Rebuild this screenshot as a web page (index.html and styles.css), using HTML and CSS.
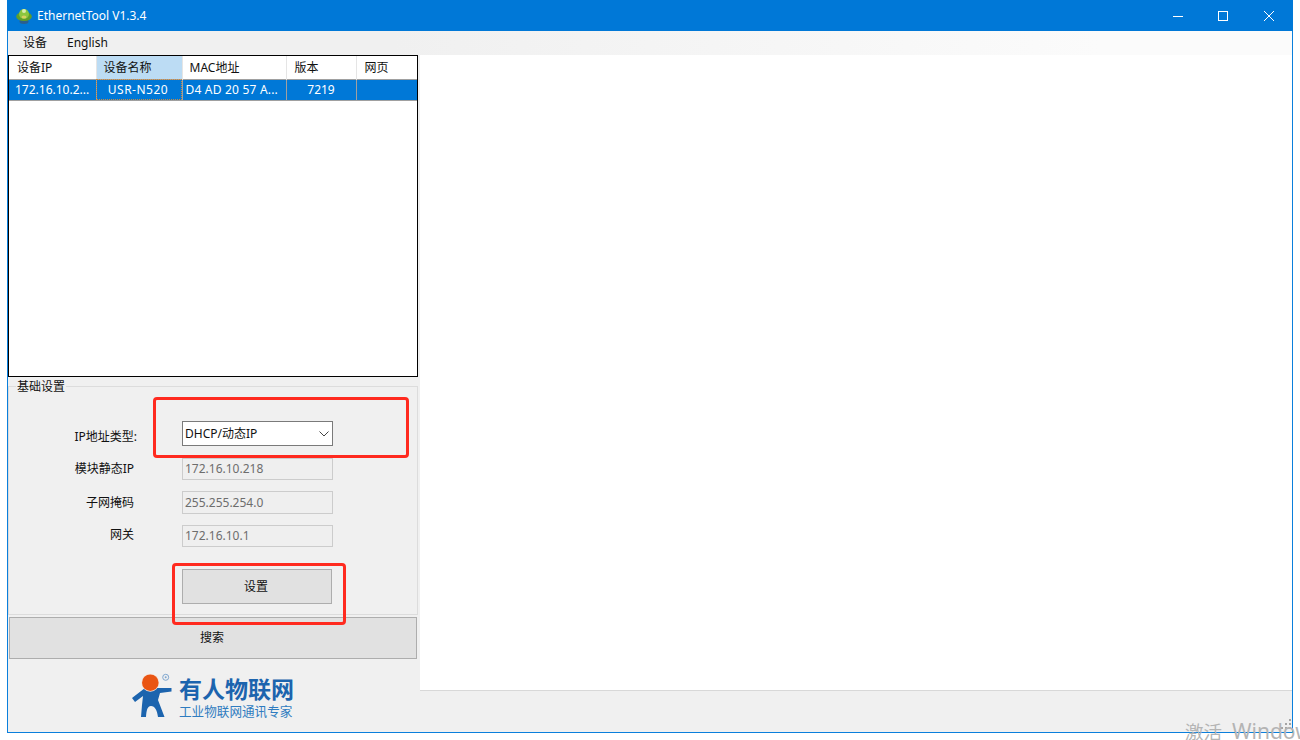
FILE: index.html
```html
<!DOCTYPE html>
<html lang="zh-CN">
<head>
    <meta charset="UTF-8">
    <title>EthernetTool V1.3.4</title>
    <link rel="stylesheet" href="styles.css">
</head>
<body>
    <div class="window">
        <div class="titlebar">
            <svg class="app-icon" width="16" height="16" viewBox="0 0 16 16">
                <ellipse cx="8" cy="13.500" rx="4.500" ry="2.500" fill="#2b5f8f"/>
                <ellipse cx="8" cy="8.500" rx="7.800" ry="4.500" fill="#5f9e2a"/>
                <circle cx="8" cy="6" r="5" fill="#8cc63f"/>
                <circle cx="8" cy="3" r="2" fill="#d9eeb0"/>
                <ellipse cx="8" cy="9" rx="2.500" ry="1.500" fill="#d8d060"/>
            </svg>
            <span class="title-text">EthernetTool V1.3.4</span>
            <div class="win-btns">
                <div class="win-btn">
                    <svg width="12" height="12" viewBox="0 0 12 12"><path d="M2 6.500H12" stroke="#fff" fill="none"/></svg>
                </div>
                <div class="win-btn">
                    <svg width="12" height="12" viewBox="0 0 12 12"><rect x="1.500" y="1.500" width="9" height="9" stroke="#fff" fill="none"/></svg>
                </div>
                <div class="win-btn">
                    <svg width="12" height="12" viewBox="0 0 12 12"><path d="M1 1L11 11M11 1L1 11" stroke="#fff" fill="none"/></svg>
                </div>
            </div>
        </div>

        <div class="menubar">
            <span class="menu-item">设备</span>
            <span class="menu-item">English</span>
        </div>

        <div class="main">
            <div class="left-panel">
                <div class="device-list">
                    <table>
                        <colgroup>
                            <col class="col-ip"><col class="col-name"><col class="col-mac"><col class="col-ver"><col class="col-web">
                        </colgroup>
                        <thead>
                            <tr>
                                <th>设备IP</th>
                                <th class="sorted">设备名称</th>
                                <th class="mac-head">MAC地址</th>
                                <th>版本</th>
                                <th>网页</th>
                            </tr>
                        </thead>
                        <tbody>
                            <tr class="selected">
                                <td class="ip-cell">172.16.10.2...</td>
                                <td class="focused">USR-N520</td>
                                <td class="mac-cell">D4 AD 20 57 A...</td>
                                <td>7219</td>
                                <td></td>
                            </tr>
                        </tbody>
                    </table>
                </div>

                <fieldset class="settings">
                    <legend>基础设置</legend>
                    <div class="form-grid">
                        <label class="type-label">IP地址类型:</label>
                        <div class="select-box">
                            <span>DHCP/动态IP</span>
                            <svg width="10" height="6" viewBox="0 0 10 6"><path d="M0.500 0.500L5 5L9.500 0.500" stroke="#444" fill="none"/></svg>
                        </div>
                        <label>模块静态IP</label>
                        <input class="field" type="text" value="172.16.10.218" disabled>
                        <label>子网掩码</label>
                        <input class="field" type="text" value="255.255.254.0" disabled>
                        <label class="gw-label">网关</label>
                        <input class="field" type="text" value="172.16.10.1" disabled>
                    </div>
                    <button class="btn btn-set">设置</button>
                </fieldset>

                <button class="btn btn-search">搜索</button>

                <div class="logo">
                    <svg width="44" height="46" viewBox="0 0 44 46">
                        <path d="M40.500 16V19.500L29 21L27 28L33.500 45H27C26 38 24 34 20 34C16 34 15.500 39 15 45H10L11 33L12 24L4 30L1 26L14 16Z" fill="#1c64ae"/>
                        <circle cx="19.300" cy="10.700" r="9" fill="#f6e3d8"/>
                        <circle cx="19.300" cy="10.700" r="8.300" fill="#e95513"/>
                        <circle cx="34.700" cy="5.300" r="1" fill="#7fa6cf"/>
                        <circle cx="34.700" cy="5.300" r="3" fill="none" stroke="#7fa6cf"/>
                    </svg>
                    <div class="logo-text">
                        <div class="logo-name">有人物联网</div>
                        <div class="logo-sub">工业物联网通讯专家</div>
                    </div>
                </div>
            </div>

            <div class="right-panel">
                <div class="content"></div>
                <div class="statusbar"></div>
            </div>
        </div>
    </div>

    <!-- red marks drawn over the screenshot -->
    <div class="mark mark-type"></div>
    <div class="mark mark-set"></div>

    <svg class="grip" width="10" height="11" viewBox="0 0 10 11">
        <path d="M8 0h2v2H8zM4 4h2v2H4zM8 4h2v2H8zM0 8h2v2H0zM4 8h2v2H4zM8 8h2v2H8z" fill="#a4a4a4"/>
    </svg>
    <div class="watermark">激活<span class="wm-latin">Windows</span></div>
</body>
</html>
```

FILE: styles.css
```css
* {
    box-sizing: border-box;
    margin: 0;
    padding: 0;
    font-family: "Noto Sans", "Noto Sans CJK SC", sans-serif;
}

html, body {
    width: 1300px;
    height: 740px;
    overflow: hidden;
}

body {
    background-color: #fff;
    padding-left: 7px;
    font-size: 12px;
    color: #111;
    position: relative;
}

.window {
    width: 1286px;
    height: 733px;
    border: 1px solid #0a7fdc;
    border-top: none;
    display: flex;
    flex-direction: column;
}

.titlebar {
    height: 31px;
    margin: 0 -1px;
    background-color: #0078d7;
    color: #fff;
    display: flex;
    align-items: center;
    padding-left: 9px;
    flex-shrink: 0;
}

.app-icon {
    margin-right: 5px;
}

.title-text {
    font-size: 12px;
}

.win-btns {
    margin-left: auto;
    margin-right: 1px;
    display: flex;
}

.win-btn {
    width: 46px;
    height: 31px;
    display: flex;
    align-items: center;
    justify-content: center;
}

.menubar {
    height: 24px;
    flex-shrink: 0;
    background: linear-gradient(to right, #f0f0f0 30%, #fbfbfb 85%);
    display: flex;
    align-items: center;
    padding: 0 0 2px 15px;
    gap: 20px;
}

.main {
    flex: 1;
    display: flex;
    min-height: 0;
}

.left-panel {
    width: 412px;
    flex-shrink: 0;
    background-color: #f0f0f0;
}

.device-list {
    width: 410px;
    height: 322px;
    background-color: #fff;
    border: 1px solid #000;
}

table {
    width: 100%;
    table-layout: fixed;
    border-collapse: collapse;
}

.col-ip { width: 87px; }
.col-name { width: 86px; }
.col-mac { width: 104px; }
.col-ver { width: 70px; }
.col-web { width: 61px; }

th {
    height: 23px;
    padding-left: 8px;
    font-weight: normal;
    text-align: left;
    border-right: 1px solid #e5e5e5;
}

th.sorted {
    background-color: #bcdcf4;
    padding-left: 7px;
}

th.mac-head {
    padding-left: 7px;
}

td {
    height: 21px;
    background-color: #0078d7;
    color: #fff;
    text-align: center;
    border: 1px solid #a0a0a0;
    border-left: none;
    white-space: nowrap;
}

td:last-child, th:last-child {
    border-right: none;
}

td.focused {
    outline: 1px dotted #c88a40;
    outline-offset: -1px;
    letter-spacing: 0.5px;
    padding-right: 2px;
}

.ip-cell {
    text-align: left;
    padding-left: 6px;
}

.mac-cell {
    text-align: left;
    padding-left: 3px;
    letter-spacing: 0.2px;
}

.settings {
    width: 410px;
    height: 238px;
    border: 1px solid #dcdcdc;
    padding: 26px 0 0;
}

.settings legend {
    margin-left: 7px;
    padding: 2px 1px 0;
    line-height: 16px;
}

.form-grid {
    display: grid;
    grid-template-columns: 128px 151px;
    grid-template-rows: 26px 22px 23px 22px;
    column-gap: 45px;
    row-gap: 11px;
    align-items: center;
}

.form-grid label {
    text-align: right;
    padding: 0 3px 2px 0;
    white-space: nowrap;
}

.form-grid .type-label {
    padding: 3px 0 0;
}

.form-grid .gw-label {
    padding-bottom: 4px;
}

.select-box {
    height: 25px;
    align-self: start;
    background-color: #fff;
    border: 1px solid #7a7a7a;
    display: flex;
    align-items: center;
    justify-content: space-between;
    padding: 0 3px 0 2px;
}

.select-box span {
    padding-bottom: 1px;
}

.field {
    height: 100%;
    width: 100%;
    background-color: #efefef;
    border: 1px solid #ccc;
    font-size: 12px;
    color: #6d6d6d;
    padding: 0 0 1px 2px;
}

.btn {
    display: block;
    background-color: #e1e1e1;
    border: 1px solid #adadad;
    font-size: 12px;
    color: #111;
    padding: 0 2px 2px 0;
}

.btn-set {
    width: 150px;
    height: 35px;
    margin: 22px 0 0 173px;
}

.btn-search {
    width: 408px;
    height: 42px;
    margin: 2px 0 0 1px;
}

.logo {
    display: flex;
    align-items: flex-start;
    gap: 4px;
    margin: 13px 0 0 123px;
}

.logo-text {
    margin-top: 2px;
}

.logo-name {
    font-size: 23px;
    line-height: 30px;
    font-weight: 700;
    color: #1c64ae;
}

.logo-sub {
    font-size: 12.6px;
    line-height: 16px;
    color: #2f7cc0;
    white-space: nowrap;
}

.right-panel {
    flex: 1;
    display: flex;
    flex-direction: column;
}

.content {
    flex: 1;
    background-color: #fff;
}

.statusbar {
    height: 42px;
    background-color: #f0f0f0;
    border-top: 1px solid #d8d8d8;
}

.mark {
    position: absolute;
    border: 3px solid #ff2a1f;
    border-radius: 4px;
}

.mark-type {
    left: 153px;
    top: 397px;
    width: 256px;
    height: 61px;
}

.mark-set {
    left: 172px;
    top: 563px;
    width: 174px;
    height: 62px;
}

.grip {
    position: absolute;
    left: 1281px;
    top: 719px;
}

.watermark {
    position: absolute;
    left: 1185px;
    top: 717px;
    font-size: 18.500px;
    line-height: 28px;
    color: #b4b4b4;
    white-space: nowrap;
}

.wm-latin {
    font-size: 21px;
    margin-left: 10px;
}
```
